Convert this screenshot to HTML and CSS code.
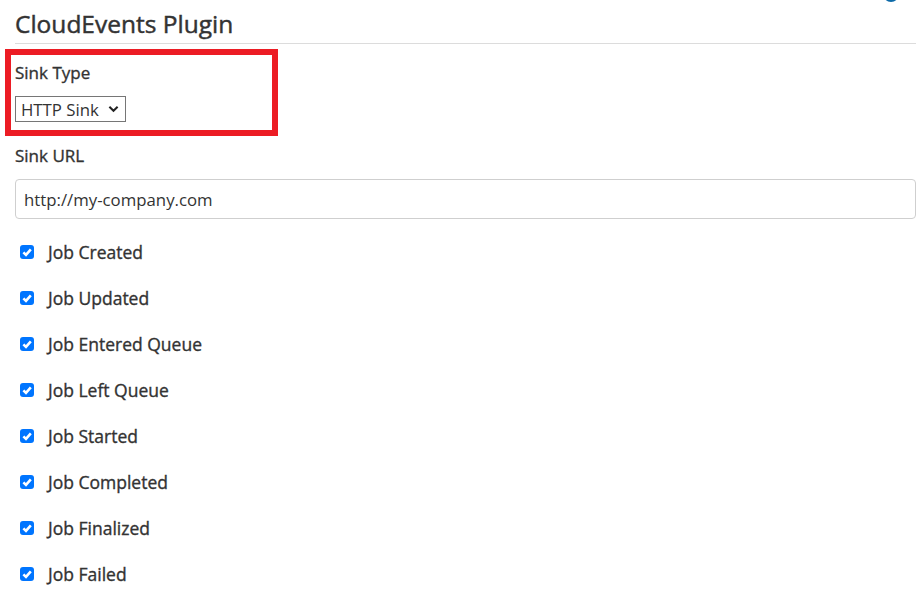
FILE: index.html
```html
<!DOCTYPE html>
<html>
<head>
<meta charset="utf-8">
<link rel="stylesheet" href="styles.css">
</head>
<body>
<div class="page">
  <header class="title-bar">
    <h1 class="title">CloudEvents Plugin</h1>
    <span class="corner-icon"></span>
  </header>
  <div class="highlight">
    <label class="field-label" for="sink-type">Sink Type</label>
    <div class="select-wrap">
      <select id="sink-type" class="sink-select">
        <option>HTTP Sink</option>
      </select>
      <svg class="chevron" viewBox="0 0 12 8"><path d="M1.5 1.5 L6 6 L10.5 1.5" /></svg>
    </div>
  </div>
  <div class="field">
    <label class="field-label" for="sink-url">Sink URL</label>
    <input id="sink-url" class="text-input" type="text" value="http://my-company.com">
  </div>
  <ul class="checks">
    <li class="check-row"><span class="box"><svg viewBox="0 0 14 14"><path d="M3.4 7.3 L6 9.9 L10.8 4.4" /></svg></span><span class="check-label">Job Created</span></li>
    <li class="check-row"><span class="box"><svg viewBox="0 0 14 14"><path d="M3.4 7.3 L6 9.9 L10.8 4.4" /></svg></span><span class="check-label">Job Updated</span></li>
    <li class="check-row"><span class="box"><svg viewBox="0 0 14 14"><path d="M3.4 7.3 L6 9.9 L10.8 4.4" /></svg></span><span class="check-label">Job Entered Queue</span></li>
    <li class="check-row"><span class="box"><svg viewBox="0 0 14 14"><path d="M3.4 7.3 L6 9.9 L10.8 4.4" /></svg></span><span class="check-label">Job Left Queue</span></li>
    <li class="check-row"><span class="box"><svg viewBox="0 0 14 14"><path d="M3.4 7.3 L6 9.9 L10.8 4.4" /></svg></span><span class="check-label">Job Started</span></li>
    <li class="check-row"><span class="box"><svg viewBox="0 0 14 14"><path d="M3.4 7.3 L6 9.9 L10.8 4.4" /></svg></span><span class="check-label">Job Completed</span></li>
    <li class="check-row"><span class="box"><svg viewBox="0 0 14 14"><path d="M3.4 7.3 L6 9.9 L10.8 4.4" /></svg></span><span class="check-label">Job Finalized</span></li>
    <li class="check-row"><span class="box"><svg viewBox="0 0 14 14"><path d="M3.4 7.3 L6 9.9 L10.8 4.4" /></svg></span><span class="check-label">Job Failed</span></li>
  </ul>
</div>
</body>
</html>
```

FILE: styles.css
```css
* { box-sizing: border-box; }
html, body {
  margin: 0;
  padding: 0;
  background: #fff;
  overflow: hidden;
}
body {
  font-family: "Open Sans", "Noto Sans", sans-serif;
  color: #333;
  width: 922px;
  height: 614px;
}
.page {
  padding: 0 6px 0 0;
}
.title-bar {
  position: relative;
  margin-left: 15px;
  height: 44px;
  border-bottom: 1px solid #dcdcdc;
}
.title {
  margin: 0;
  padding-top: 8px;
  font-size: 24.5px;
  line-height: 32px;
  font-weight: 400;
  color: #333;
  letter-spacing: 0;
  -webkit-text-stroke: 0.45px #333;
}
.corner-icon {
  position: absolute;
  right: 17px;
  top: -14px;
  width: 16px;
  height: 16px;
  border-radius: 50%;
  background: #0d6aa8;
}
.highlight {
  margin: 5px 0 0 5px;
  width: 273px;
  border: 6px solid #ec1c24;
  padding: 6px 0 8px 4px;
}
.field-label {
  display: block;
  font-size: 17px;
  line-height: 24px;
  font-weight: 400;
  color: #333;
  -webkit-text-stroke: 0.35px #333;
}
.select-wrap {
  position: relative;
  margin-top: 11px;
  width: 111px;
  height: 26px;
}
.sink-select {
  appearance: none;
  -webkit-appearance: none;
  font-family: inherit;
  font-size: 16.8px;
  height: 26px;
  width: 111px;
  padding: 0 0 0 5px;
  border: 1px solid #767676;
  border-radius: 0;
  background: #fff;
  color: #333;
}
.chevron {
  position: absolute;
  left: 93px;
  top: 9px;
  width: 11px;
  height: 8px;
  pointer-events: none;
}
.chevron path {
  fill: none;
  stroke: #222;
  stroke-width: 2.2;
}
.field {
  padding-left: 15px;
  margin-top: 8px;
}
.text-input {
  display: block;
  margin-top: 11px;
  width: 901px;
  height: 40px;
  padding: 0 8px;
  border: 1px solid #cfcfcf;
  border-radius: 4px;
  font-family: inherit;
  font-size: 16.8px;
  color: #333;
}
.checks {
  list-style: none;
  margin: 10px 0 0 0;
  padding: 0 0 0 20px;
}
.check-row {
  display: flex;
  align-items: center;
  height: 46px;
}
.box {
  width: 14px;
  height: 14px;
  border-radius: 3px;
  background: #0075ff;
  display: flex;
}
.box svg {
  width: 14px;
  height: 14px;
}
.box path {
  fill: none;
  stroke: #fff;
  stroke-width: 2.6;
}
.check-label {
  margin-left: 14px;
  font-size: 17.5px;
  font-weight: 400;
  color: #333;
  -webkit-text-stroke: 0.35px #333;
}
```
